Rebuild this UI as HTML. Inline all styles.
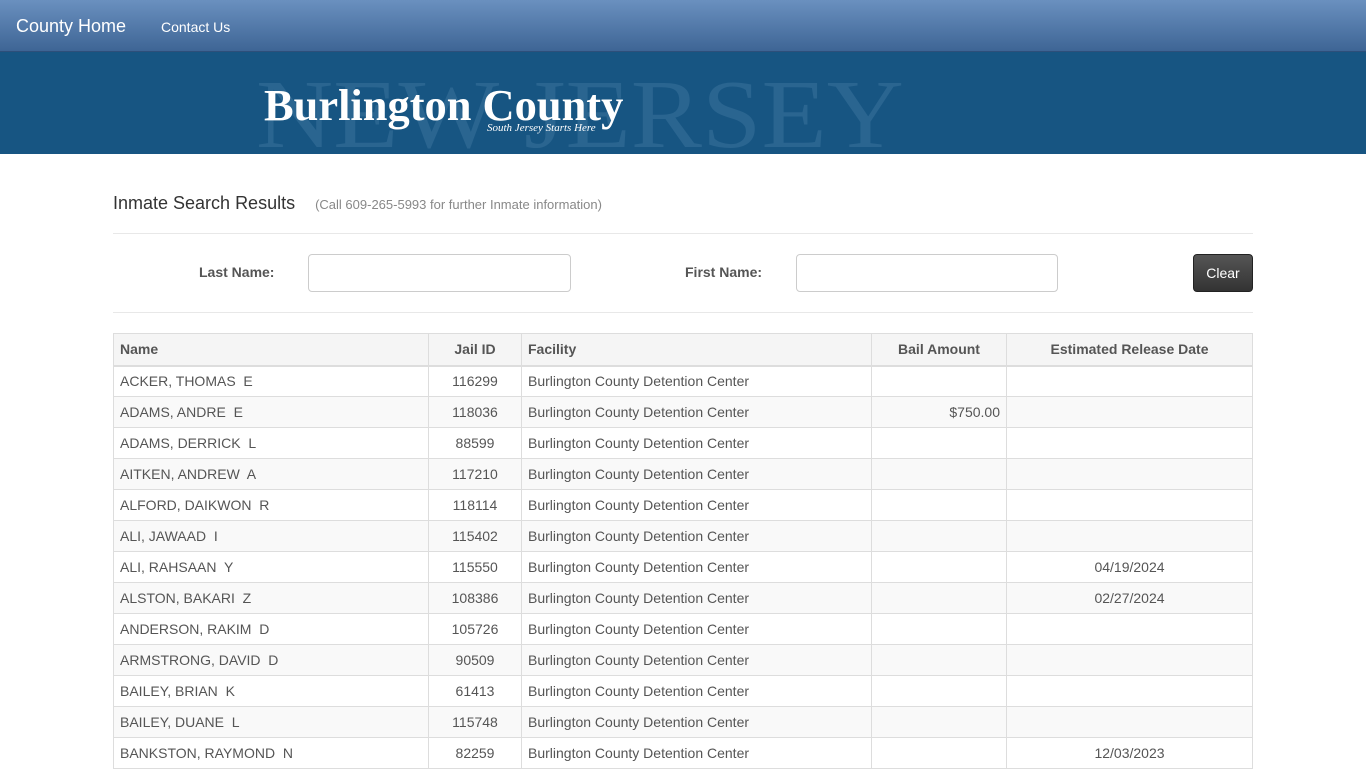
<!DOCTYPE html>
<html><head><meta charset="utf-8"><style>
body{margin:0;font-family:"Liberation Sans",sans-serif;background:#fff;color:#555;font-size:14px}
.nav{height:51px;background:linear-gradient(#6a90bf,#3e6595);border-bottom:1px solid #2d4f7a;position:relative}
.nav a{position:absolute;color:#fff;text-decoration:none}
.ban{height:102px;background:#175582;position:relative;overflow:hidden}
.nj{position:absolute;left:256px;font-family:"Liberation Serif",serif;font-size:98px;color:#2a6590;line-height:1;transform:scaleX(1.09);transform-origin:left}
.bc{position:absolute;left:264px;font-family:"Liberation Serif",serif;font-weight:bold;font-size:44px;color:#fff;line-height:1;transform:scaleX(1.01);transform-origin:left}
.sj{position:absolute;left:487px;font-family:"Liberation Serif",serif;font-style:italic;font-size:11px;color:#fff}
h1{position:absolute;left:113px;top:193px;margin:0;font-weight:normal;font-size:18px;color:#333}
h1 small{font-size:13px;color:#888;margin-left:20px}
.hr{position:absolute;left:113px;width:1140px;border-top:1px solid #e8e8e8}
label{position:absolute;font-weight:bold;color:#555;font-size:14px}
.in{position:absolute;height:36px;border:1px solid #ccc;border-radius:4px;box-sizing:border-box}
.btn{position:absolute;left:1193px;top:254px;width:60px;height:38px;background:linear-gradient(#555,#333);border:1px solid #222;border-radius:4px;color:#fff;box-sizing:border-box;text-align:center;line-height:36px}
table{position:absolute;left:113px;top:333px;border-collapse:collapse;width:1140px}
td,th{border:1px solid #ddd;height:31px;padding:0 6px;font-size:14px;box-sizing:border-box}
th{background:#f5f5f5;text-align:left;border-bottom:2px solid #ddd;height:32px;color:#555}
tr:nth-child(odd) td{background:#f9f9f9}
.c{text-align:center}.r{text-align:right}
</style></head><body>
<div class="nav"><a style="left:16px;top:16px;font-size:18px">County Home</a><a style="left:161px;top:19px;font-size:14px">Contact Us</a></div>
<div class="ban"><div class="nj" style="top:14px">NEW JERSEY</div><div class="bc" style="top:32px">Burlington County</div><div class="sj" style="top:70px">South Jersey Starts Here</div></div>
<h1>Inmate Search Results<small>(Call 609-265-5993 for further Inmate information)</small></h1>
<div class="hr" style="top:233px"></div>
<label style="left:199px;top:264px">Last Name:</label><div class="in" style="left:308px;top:254px;width:263px;height:38px"></div>
<label style="left:685px;top:264px">First Name:</label><div class="in" style="left:796px;top:254px;width:262px;height:38px"></div>
<div class="btn">Clear</div>
<div class="hr" style="top:312px"></div>
<table>
<tr><th style="width:315px">Name</th><th class="c" style="width:93px">Jail ID</th><th style="width:350px">Facility</th><th class="c" style="width:135px">Bail Amount</th><th class="c">Estimated Release Date</th></tr>
<tr><td>ACKER, THOMAS&nbsp; E</td><td class="c">116299</td><td>Burlington County Detention Center</td><td></td><td></td></tr>
<tr><td>ADAMS, ANDRE&nbsp; E</td><td class="c">118036</td><td>Burlington County Detention Center</td><td class="r">$750.00</td><td></td></tr>
<tr><td>ADAMS, DERRICK&nbsp; L</td><td class="c">88599</td><td>Burlington County Detention Center</td><td></td><td></td></tr>
<tr><td>AITKEN, ANDREW&nbsp; A</td><td class="c">117210</td><td>Burlington County Detention Center</td><td></td><td></td></tr>
<tr><td>ALFORD, DAIKWON&nbsp; R</td><td class="c">118114</td><td>Burlington County Detention Center</td><td></td><td></td></tr>
<tr><td>ALI, JAWAAD&nbsp; I</td><td class="c">115402</td><td>Burlington County Detention Center</td><td></td><td></td></tr>
<tr><td>ALI, RAHSAAN&nbsp; Y</td><td class="c">115550</td><td>Burlington County Detention Center</td><td></td><td class="c">04/19/2024</td></tr>
<tr><td>ALSTON, BAKARI&nbsp; Z</td><td class="c">108386</td><td>Burlington County Detention Center</td><td></td><td class="c">02/27/2024</td></tr>
<tr><td>ANDERSON, RAKIM&nbsp; D</td><td class="c">105726</td><td>Burlington County Detention Center</td><td></td><td></td></tr>
<tr><td>ARMSTRONG, DAVID&nbsp; D</td><td class="c">90509</td><td>Burlington County Detention Center</td><td></td><td></td></tr>
<tr><td>BAILEY, BRIAN&nbsp; K</td><td class="c">61413</td><td>Burlington County Detention Center</td><td></td><td></td></tr>
<tr><td>BAILEY, DUANE&nbsp; L</td><td class="c">115748</td><td>Burlington County Detention Center</td><td></td><td></td></tr>
<tr><td>BANKSTON, RAYMOND&nbsp; N</td><td class="c">82259</td><td>Burlington County Detention Center</td><td></td><td class="c">12/03/2023</td></tr>
</table>
</body></html>
